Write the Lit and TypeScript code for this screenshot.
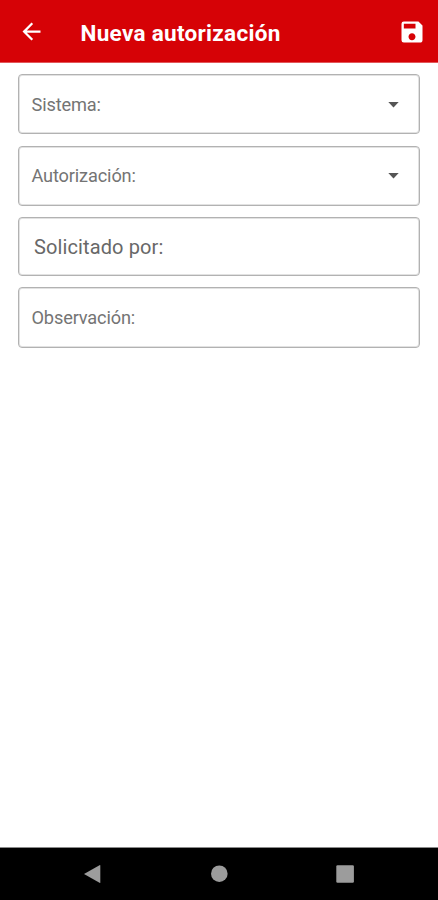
import { LitElement, html, css, svg, nothing } from "lit";
import { customElement, property } from "lit/decorators.js";

@customElement("form-field")
class FormField extends LitElement {
  @property() label = "";
  @property() kind: "select" | "text" = "text";
  @property({ type: Boolean, reflect: true }) large = false;

  static styles = css`
    :host {
      display: flex;
      align-items: center;
      justify-content: space-between;
      box-sizing: border-box;
      border: 1px solid #b2b2b2;
      border-radius: 4px;
      box-shadow: inset 0 0 0 1px #e2e2e2;
      padding: 0 20.5px 0 12.5px;
      background: #fff;
    }
    .label {
      font-size: 18.2px;
      line-height: 24px;
      color: #747474;
      white-space: nowrap;
      letter-spacing: -0.15px;
    }
    :host([large]) .label {
      font-size: 20px;
      color: #686868;
      letter-spacing: 0.12px;
      padding-left: 2.5px;
    }
    .caret {
      width: 11px;
      height: 6px;
      display: block;
      fill: #555;
    }
  `;

  render() {
    return html`<span class="label">${this.label}</span>
      ${this.kind === "select"
        ? html`<svg class="caret" viewBox="0 0 11 6">${svg`<path d="M0.300 0h10.400L5.500 5.500z" />`}</svg>`
        : nothing}`;
  }
}

@customElement("app-root")
class AppRoot extends LitElement {
  static styles = css`
    :host {
      display: flex;
      flex-direction: column;
      height: 100vh;
      overflow: hidden;
      background: #fff;
      font-family: Roboto, "Liberation Sans", sans-serif;
    }
    .bar {
      display: flex;
      align-items: center;
      box-sizing: border-box;
      height: 63px;
      padding: 1px 12.5px 0 18px;
      background: #d60206;
      border-bottom: 1px solid #e2575a;
      color: #fff;
    }
    .icon {
      display: block;
      fill: #fff;
    }
    .back {
      width: 27px;
      height: 27px;
    }
    .save {
      width: 28px;
      height: 28px;
    }
    .title {
      flex: 1;
      margin: 0 0 0 35.5px;
      padding-top: 2px;
      font-size: 22.5px;
      font-weight: 700;
      line-height: 30px;
      letter-spacing: 0.3px;
      white-space: nowrap;
    }
    .form {
      flex: 1;
      display: grid;
      grid-template-rows: 61px 60px 59px 61px;
      row-gap: 11px;
      align-content: start;
      padding: 11px 18px 0 18px;
    }
    .form form-field:first-child {
      margin-bottom: 1px;
      padding-top: 1px;
    }
    .nav {
      display: flex;
      box-sizing: border-box;
      height: 53px;
      background: #000;
      border-top: 1px solid #8a8a8a;
    }
    .nav svg {
      width: 100%;
      height: 52px;
      fill: #9c9c9c;
    }
  `;

  render() {
    return html`
      <header class="bar">
        <svg class="icon back" viewBox="0 0 24 24">
          <path d="M20 11H7.83l5.59-5.59L12 4l-8 8 8 8 1.41-1.41L7.83 13H20v-2z" />
        </svg>
        <h1 class="title">Nueva autorización</h1>
        <svg class="icon save" viewBox="0 0 24 24">
          <path
            d="M17.500 3H5a2 2 0 0 0-2 2v14a2 2 0 0 0 2 2h14c1.100 0 2-.9 2-2V6.500l-3.500-3.500zm-5.500 16c-1.660 0-3-1.340-3-3s1.340-3 3-3 3 1.340 3 3-1.340 3-3 3zm3-10H5V5h10v4z"
          />
        </svg>
      </header>
      <main class="form">
        <form-field label="Sistema:" kind="select"></form-field>
        <form-field label="Autorización:" kind="select"></form-field>
        <form-field label="Solicitado por:" large></form-field>
        <form-field label="Observación:"></form-field>
      </main>
      <footer class="nav">
        <svg viewBox="0 0 438 52">
          <path d="M84 26l15.500-8.800q.8-.4.8.4v16.800q0 .8-.8.400z" />
          <circle cx="219.300" cy="25.700" r="8.300" />
          <rect x="336.300" y="17.200" width="17.600" height="17.600" rx="1.200" />
        </svg>
      </footer>
    `;
  }
}
